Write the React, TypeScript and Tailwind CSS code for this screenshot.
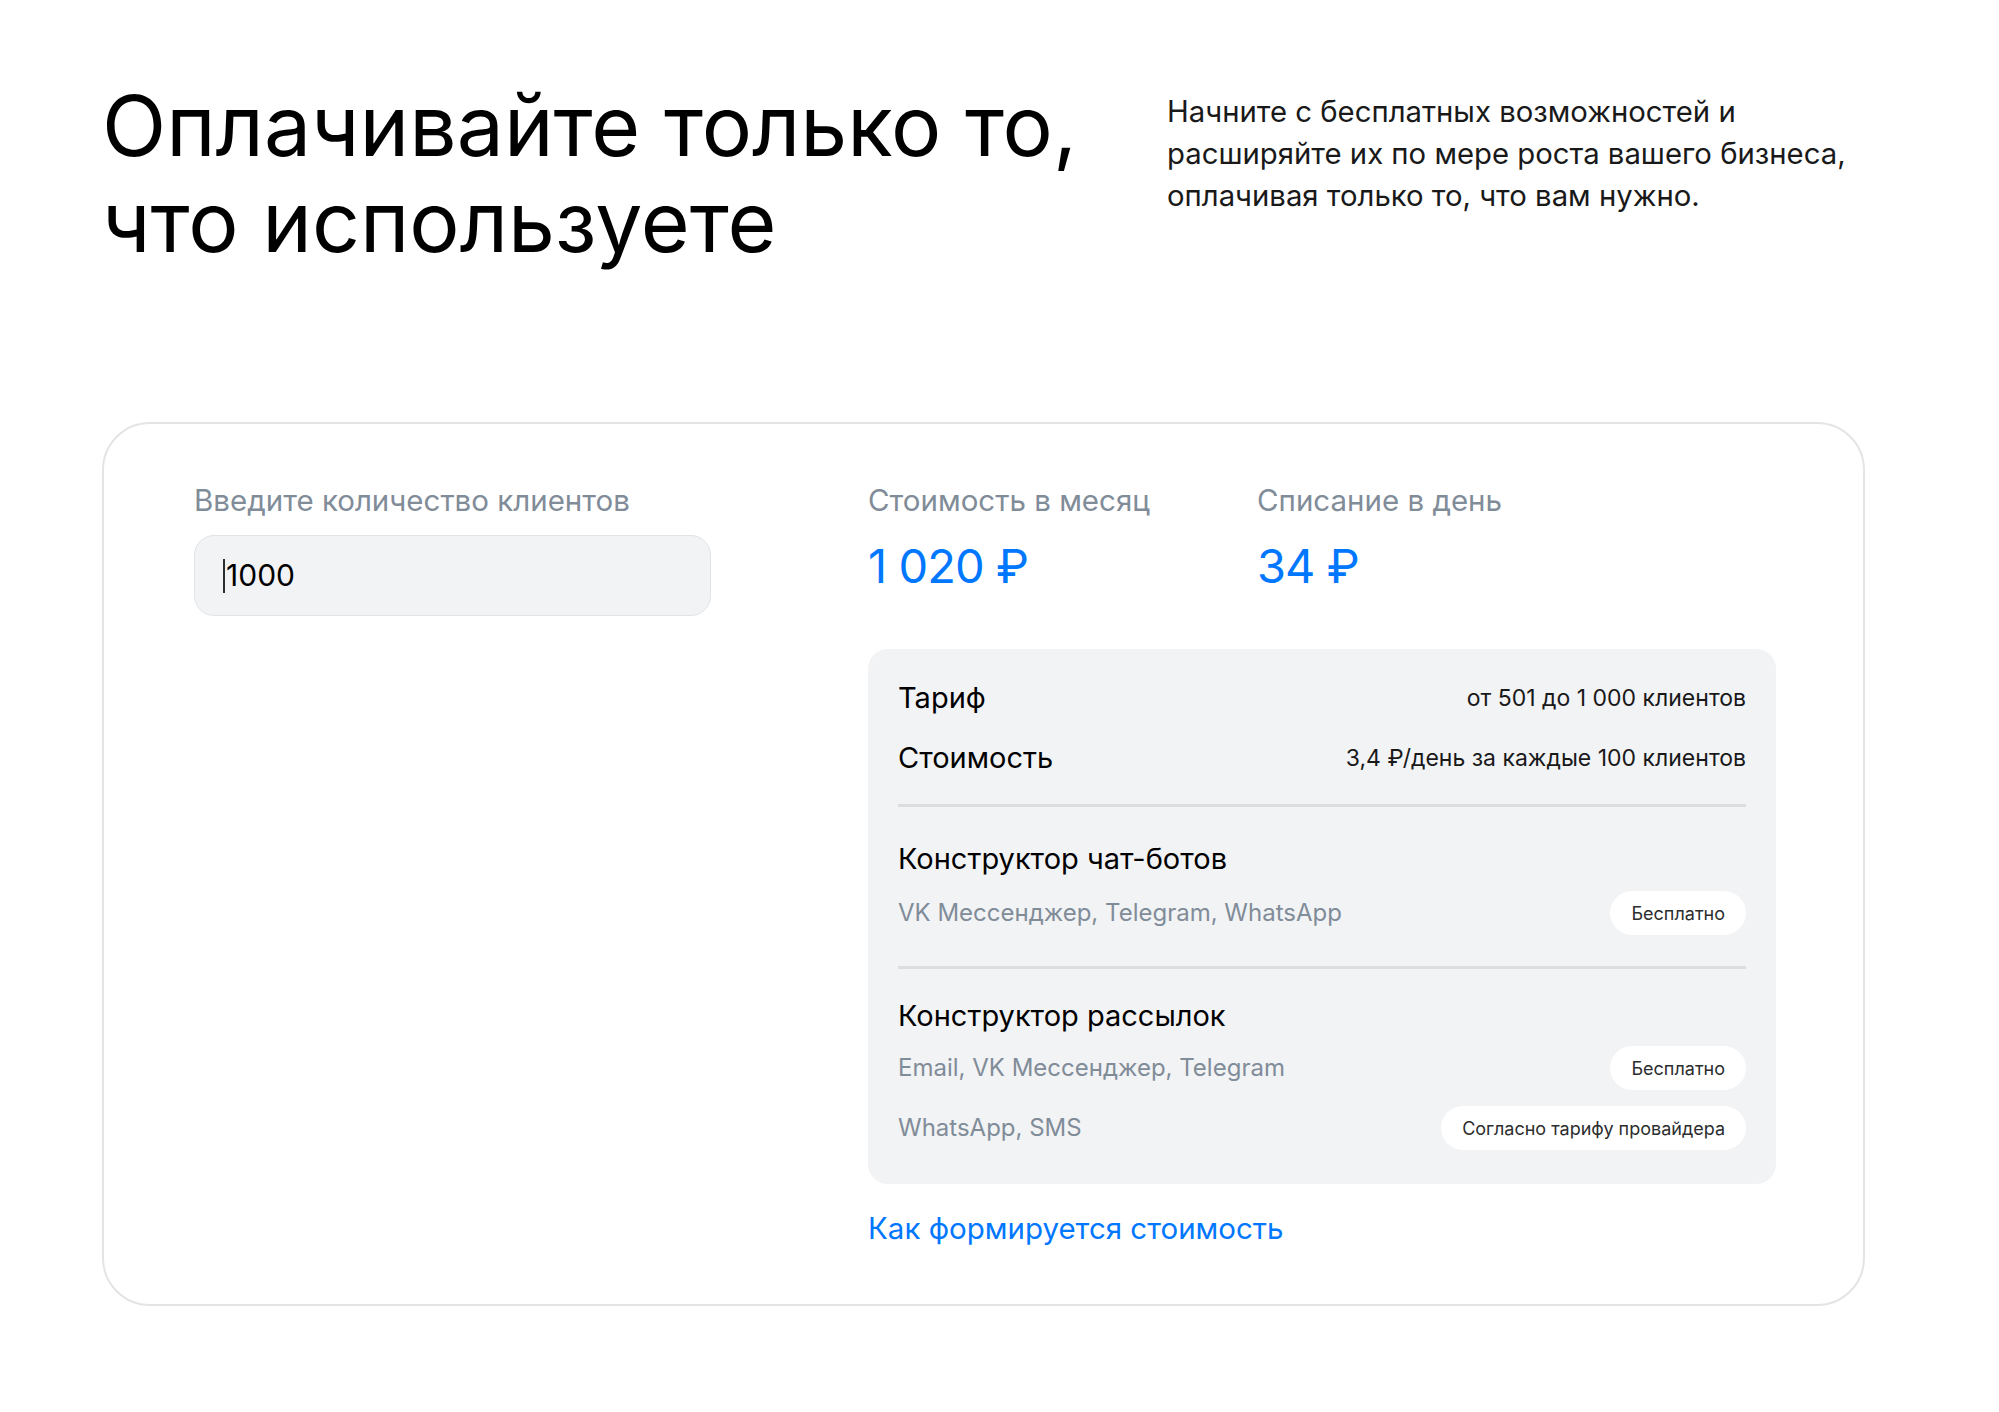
export default function App() {
  const font = { fontFamily: "Inter, 'Noto Sans', sans-serif" };
  return (
    <div className="min-h-[1412px] w-full bg-white text-black" style={font}>
      <div className="px-[102px] pt-[78px]">
        <header className="flex items-start">
          <h1 className="w-[1065px] shrink-0 text-[84px] leading-[96px] font-normal text-black">
            Оплачивайте только то,
            <br />
            что используете
          </h1>
          <p className="mt-[13px] text-[29.3px] leading-[42px] text-[#19191a]">
            Начните с бесплатных возможностей и
            <br />
            расширяйте их по мере роста вашего бизнеса,
            <br />
            оплачивая только то, что вам нужно.
          </p>
        </header>

        <section className="mt-[152px] flex w-[1763px] rounded-[48px] border-2 border-[#e3e4e6] pl-[90px] pt-[58px] pb-[56px]">
          <div className="w-[674px] shrink-0">
            <div className="text-[29.5px] leading-[36px] text-[#818c99]">
              Введите количество клиентов
            </div>
            <div className="mt-[17px] flex h-[81px] w-[517px] items-center rounded-[20px] border border-[#e1e3e6] bg-[#f2f3f5] pl-[28px]">
              <span className="mr-[1px] h-[34px] w-[2px] bg-[#2c2d2e]" />
              <span className="text-[30px] text-black">1000</span>
            </div>
          </div>

          <div className="w-[908px]">
            <div className="flex">
              <div className="w-[389px]">
                <div className="text-[29.5px] leading-[36px] text-[#818c99]">
                  Стоимость в месяц
                </div>
                <div className="mt-[18px] text-[47px] leading-[60px] tracking-[-0.02em] text-[#0077ff]">
                  1 020 ₽
                </div>
              </div>
              <div>
                <div className="text-[29.5px] leading-[36px] text-[#818c99]">
                  Списание в день
                </div>
                <div className="mt-[18px] text-[47px] leading-[60px] tracking-[-0.02em] text-[#0077ff]">
                  34 ₽
                </div>
              </div>
            </div>

            <div className="mt-[53px] rounded-[20px] bg-[#f2f3f5] px-[30px] pt-[27px] pb-[34px]">
              <div className="flex items-center justify-between">
                <span className="text-[29px] leading-[44px]">Тариф</span>
                <span className="text-[23px] text-[#19191a]">от 501 до 1 000 клиентов</span>
              </div>
              <div className="mt-[16px] flex items-center justify-between">
                <span className="text-[29px] leading-[44px]">Стоимость</span>
                <span className="text-[23px] text-[#19191a]">3,4 ₽/день за каждые 100 клиентов</span>
              </div>
              <div className="mt-[24px] h-[3px] bg-[#dcdde0]" />

              <div className="pt-[30px] pb-[31px]">
                <div className="text-[29px] leading-[44px]">Конструктор чат-ботов</div>
                <div className="mt-[10px] flex items-center justify-between">
                  <span className="text-[24px] text-[#818c99]">
                    VK Мессенджер, Telegram, WhatsApp
                  </span>
                  <Pill>Бесплатно</Pill>
                </div>
              </div>
              <div className="h-[3px] bg-[#dcdde0]" />

              <div className="pt-[25px]">
                <div className="text-[29px] leading-[44px]">Конструктор рассылок</div>
                <div className="mt-[8px] flex items-center justify-between">
                  <span className="text-[24px] text-[#818c99]">
                    Email, VK Мессенджер, Telegram
                  </span>
                  <Pill>Бесплатно</Pill>
                </div>
                <div className="mt-[16px] flex items-center justify-between">
                  <span className="text-[24px] text-[#818c99]">WhatsApp, SMS</span>
                  <Pill>Согласно тарифу провайдера</Pill>
                </div>
              </div>
            </div>

            <a href="#" className="mt-[24px] block text-[29.5px] leading-[40px] text-[#0077ff]">
              Как формируется стоимость
            </a>
          </div>
        </section>
      </div>
    </div>
  );
}

function Pill({ children }: { children: React.ReactNode }) {
  return (
    <span className="flex h-[44px] items-center rounded-full bg-white px-[21px] text-[18px] text-[#2c2d2e]">
      {children}
    </span>
  );
}
